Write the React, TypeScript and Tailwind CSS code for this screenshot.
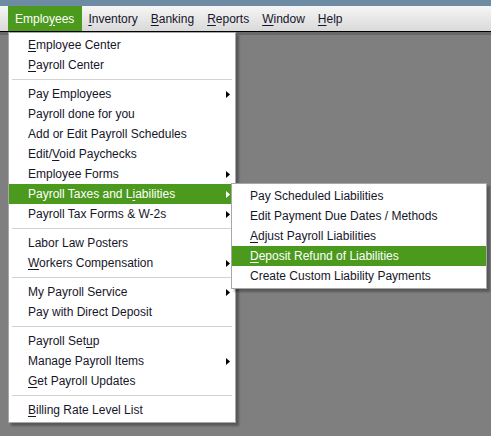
import React from "react";

type Item =
  | { sep: true }
  | { label: string; u?: number; arrow?: boolean; active?: boolean; sep?: false };

const mainItems: Item[] = [
  { label: "Employee Center", u: 0 },
  { label: "Payroll Center", u: 0 },
  { sep: true },
  { label: "Pay Employees", arrow: true },
  { label: "Payroll done for you" },
  { label: "Add or Edit Payroll Schedules" },
  { label: "Edit/Void Paychecks", u: 5 },
  { label: "Employee Forms", arrow: true },
  { label: "Payroll Taxes and Liabilities", u: 19, arrow: true, active: true },
  { label: "Payroll Tax Forms & W-2s", arrow: true },
  { sep: true },
  { label: "Labor Law Posters" },
  { label: "Workers Compensation", u: 0, arrow: true },
  { sep: true },
  { label: "My Payroll Service", arrow: true },
  { label: "Pay with Direct Deposit" },
  { sep: true },
  { label: "Payroll Setup", u: 11 },
  { label: "Manage Payroll Items", arrow: true },
  { label: "Get Payroll Updates", u: 0 },
  { sep: true },
  { label: "Billing Rate Level List", u: 0 },
];

const subItems: Item[] = [
  { label: "Pay Scheduled Liabilities" },
  { label: "Edit Payment Due Dates / Methods" },
  { label: "Adjust Payroll Liabilities", u: 0 },
  { label: "Deposit Refund of Liabilities", u: 0, active: true },
  { label: "Create Custom Liability Payments" },
];

function Label({ text, u }: { text: string; u?: number }) {
  if (u === undefined) return <>{text}</>;
  return (
    <>
      {text.slice(0, u)}
      <span className="underline underline-offset-2">{text[u]}</span>
      {text.slice(u + 1)}
    </>
  );
}

function Arrow({ white }: { white?: boolean }) {
  return (
    <svg width="4" height="7" viewBox="0 0 4 7" className="shrink-0">
      <path d="M0 0 L4 3.5 L0 7 Z" fill={white ? "#ffffff" : "#000000"} />
    </svg>
  );
}

function MenuRows({ items, textPad }: { items: Item[]; textPad: string }) {
  return (
    <>
      {items.map((it, i) =>
        it.sep ? (
          <div key={i} className="h-[9px] flex items-center px-[3px]">
            <div className="h-px w-full bg-[#d2d2d2]" />
          </div>
        ) : (
          <div
            key={i}
            className={
              "h-5 flex items-center pr-[5px] " +
              textPad +
              (it.active ? " bg-[#4c9a1d] text-white" : " text-[#16162a]")
            }
          >
            <span className="flex-1 whitespace-nowrap">
              <Label text={it.label} u={it.u} />
            </span>
            {it.arrow && <Arrow white={it.active} />}
          </div>
        )
      )}
    </>
  );
}

const menuBar: { label: string; u: number; active?: boolean; pl: string; pr: string }[] = [
  { label: "Employees", u: 5, active: true, pl: "pl-[7px]", pr: "pr-[8px]" },
  { label: "Inventory", u: 0, pl: "pl-[6px]", pr: "pr-[7px]" },
  { label: "Banking", u: 0, pl: "pl-[6px]", pr: "pr-[7px]" },
  { label: "Reports", u: 0, pl: "pl-[6px]", pr: "pr-[7px]" },
  { label: "Window", u: 0, pl: "pl-[6px]", pr: "pr-[7px]" },
  { label: "Help", u: 0, pl: "pl-[6px]", pr: "pr-[7px]" },
];

export default function App() {
  return (
    <div
      className="relative w-[491px] h-[436px] overflow-hidden bg-[#7f7f7f] text-[12px] leading-none"
      style={{ fontFamily: '"Liberation Sans", Arial, sans-serif' }}
    >
      <div className="h-[6px] bg-[#6d8ba2]" />
      <div className="h-[25px] flex items-stretch bg-gradient-to-b from-[#f6f6f6] to-[#d9d9d9] pl-[8px]">
        {menuBar.map((m, i) => (
          <div
            key={i}
            className={
              "flex items-center " +
              m.pl +
              " " +
              m.pr +
              (m.active ? " bg-[#4c9a1d] text-white" : " text-[#16162a]")
            }
          >
            <Label text={m.label} u={m.u} />
          </div>
        ))}
      </div>
      <div className="h-px bg-black" />
      <div className="h-[3px] bg-[#686868]" />

      {/* Employees dropdown */}
      <div className="absolute left-[8px] top-[32px] w-[228px] bg-white border border-[#a8a8a8] py-[2px] shadow-[3px_3px_2px_rgba(0,0,0,0.3)]">
        <MenuRows items={mainItems} textPad="pl-[19px]" />
      </div>

      {/* Submenu */}
      <div className="absolute left-[231px] top-[183px] w-[256px] bg-white border border-[#a8a8a8] py-[2px] shadow-[3px_3px_2px_rgba(0,0,0,0.3)]">
        <MenuRows items={subItems} textPad="pl-[18px]" />
      </div>
    </div>
  );
}
